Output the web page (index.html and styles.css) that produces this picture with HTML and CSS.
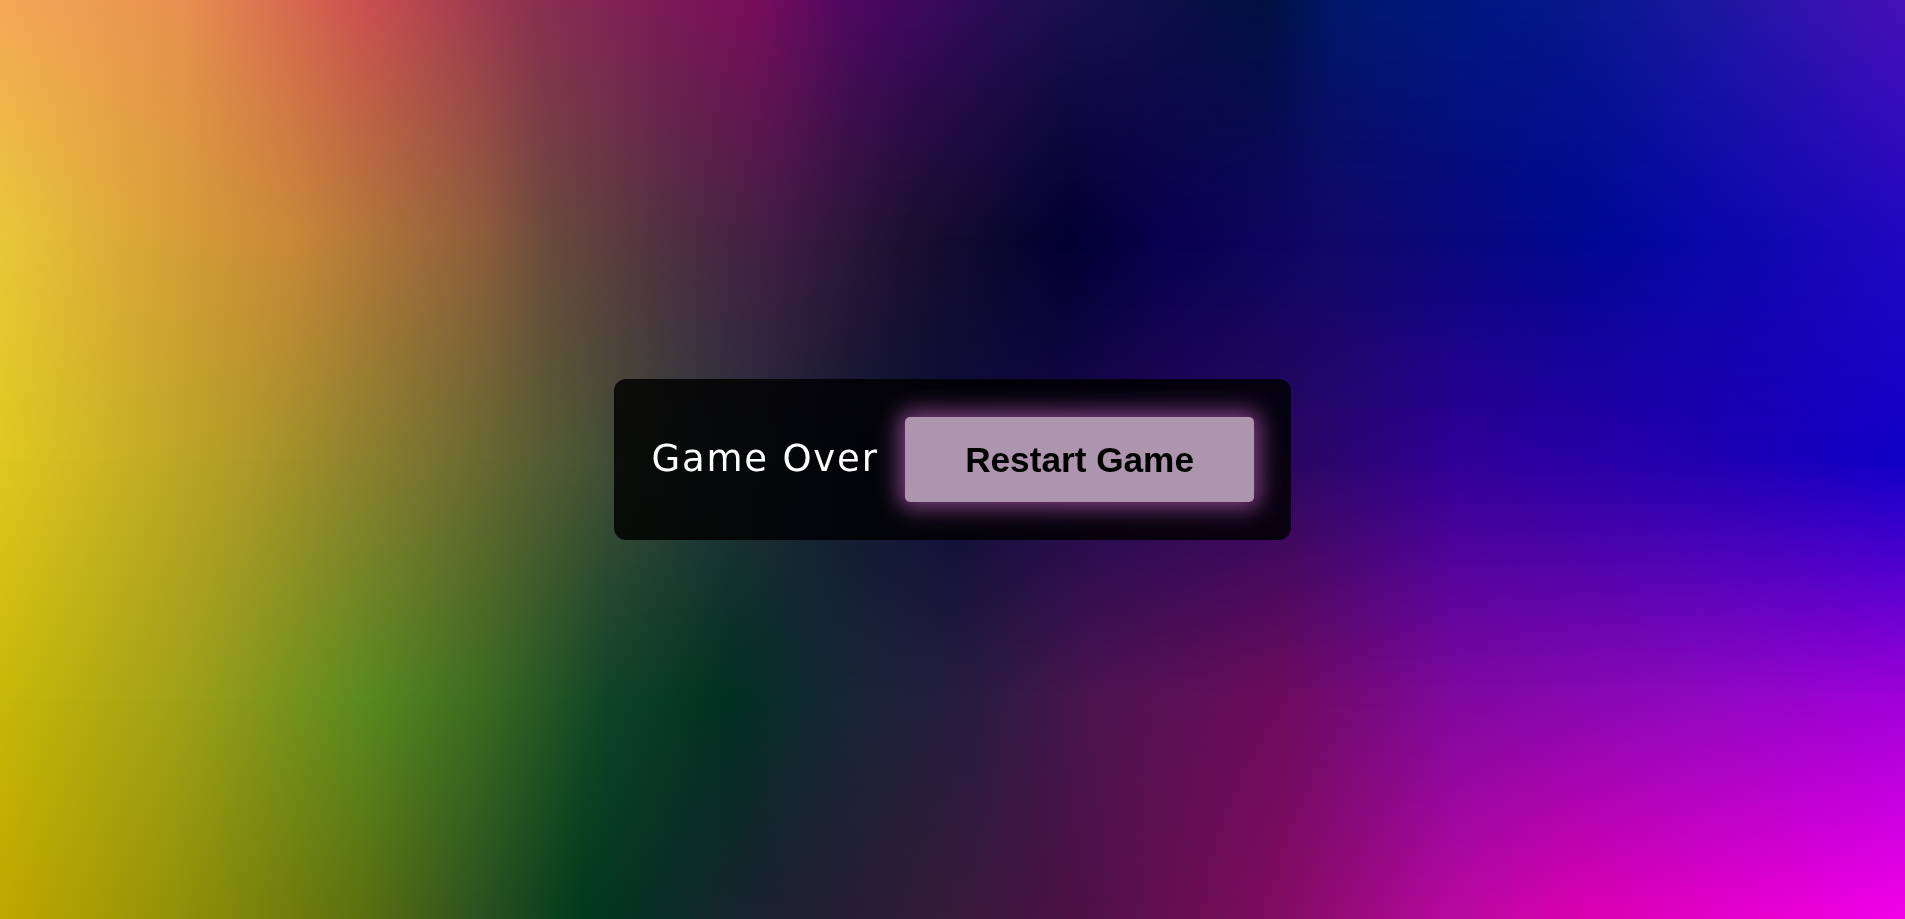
FILE: index.html
```html
<!DOCTYPE html>
<html lang="en">
<head>
<meta charset="utf-8">
<title>Game Over</title>
<link rel="stylesheet" href="styles.css">
</head>
<body>
<div class="bg" aria-hidden="true">
  <div class="layer row0"></div>
  <div class="layer row1"></div>
  <div class="layer row2"></div>
  <div class="layer row3"></div>
  <div class="layer row4"></div>
</div>
<main class="stage">
  <div class="panel">
    <span class="title">Game Over</span>
    <button class="restart" type="button">Restart Game</button>
  </div>
</main>
</body>
</html>
```
FILE: styles.css
```css
html, body {
  margin: 0;
  padding: 0;
  height: 100%;
}

body {
  font-family: "Liberation Sans", Arial, sans-serif;
  overflow: hidden;
  background: #000;
}

.bg {
  position: fixed;
  inset: 0;
  z-index: 0;
}

.layer {
  position: absolute;
  inset: 0;
}

.row0 {
  background: linear-gradient(to right,
    #f5a858 0%, #e89050 9.6%, #cc5050 19.1%, #8a3050 28.1%, #7a1858 35.7%,
    #7a0e5c 39.5%, #500860 44.6%, #400860 47.8%, #201050 54.2%, #001040 66.3%,
    #00186a 70.1%, #001880 76.5%, #08188c 82.9%, #1a18a0 89.3%, #4810b8 100%);
}

.row1 {
  background: linear-gradient(to right,
    #e8c838 0%, #dcaa38 6.4%, #c88838 15.3%, #8c5c3c 25.5%, #6a4a3c 28.7%,
    #503040 35.1%, #401c44 40.8%, #1a1030 47.8%, #000030 56.1%, #08004c 60.6%,
    #100868 70.1%, #000890 82.9%, #0808a8 89.3%, #2008c0 100%);
  -webkit-mask-image: linear-gradient(to bottom, transparent 0%, #000 26%);
  mask-image: linear-gradient(to bottom, transparent 0%, #000 26%);
}

.row2 {
  background: linear-gradient(to right,
    #e0c820 0%, #b09a28 12.8%, #7a7430 22.3%, #485434 30.6%, #2a3a3c 36.7%,
    #101a30 44.6%, #0c0c38 49.9%, #1c0850 57.7%, #2a0860 67.6%, #300098 76.5%,
    #2000b0 89.3%, #1000c8 100%);
  -webkit-mask-image: linear-gradient(to bottom, transparent 26%, #000 50%);
  mask-image: linear-gradient(to bottom, transparent 26%, #000 50%);
}

.row3 {
  background: linear-gradient(to right,
    #c8b808 0%, #a0a018 9.6%, #5a8a20 19.1%, #3a6a20 25.5%, #104428 31.9%,
    #003020 38.3%, #182638 44.6%, #281c40 51%, #4c1450 57.4%, #6c0c5c 67%,
    #8008a0 76.5%, #9008c0 89.3%, #a000d8 100%);
  -webkit-mask-image: linear-gradient(to bottom, transparent 50%, #000 76%);
  mask-image: linear-gradient(to bottom, transparent 50%, #000 76%);
}

.row4 {
  background: linear-gradient(to right,
    #c0a800 0%, #909008 9.6%, #5a7010 19.1%, #285020 25.5%, #003a1c 30.6%,
    #0c2a28 35.7%, #1c2030 40.8%, #301c38 48.5%, #501048 57.4%, #800c60 67%,
    #b808a0 76.5%, #d800b0 82.9%, #f000e8 100%);
  -webkit-mask-image: linear-gradient(to bottom, transparent 76%, #000 99%);
  mask-image: linear-gradient(to bottom, transparent 76%, #000 99%);
}

.stage {
  position: relative;
  z-index: 1;
  min-height: 100vh;
  display: flex;
  align-items: center;
  justify-content: center;
}

.panel {
  display: flex;
  align-items: center;
  gap: 26px;
  padding: 38px 37px 38px 38px;
  border-radius: 12px;
  background: rgba(0, 0, 0, 0.83);
}

.title {
  font-family: "DejaVu Sans", "Open Sans", sans-serif;
  font-size: 37px;
  letter-spacing: 1.8px;
  color: #ffffff;
  line-height: 1.2;
}

.restart {
  font-family: "Liberation Sans", Arial, sans-serif;
  font-weight: 700;
  font-size: 35.2px;
  line-height: normal;
  color: #000;
  background: #ad95ad;
  border: none;
  border-radius: 5px;
  padding: 22.5px 60.5px;
  box-shadow: 0 0 22px 6px rgba(205, 105, 205, 0.6);
  cursor: pointer;
}
```
